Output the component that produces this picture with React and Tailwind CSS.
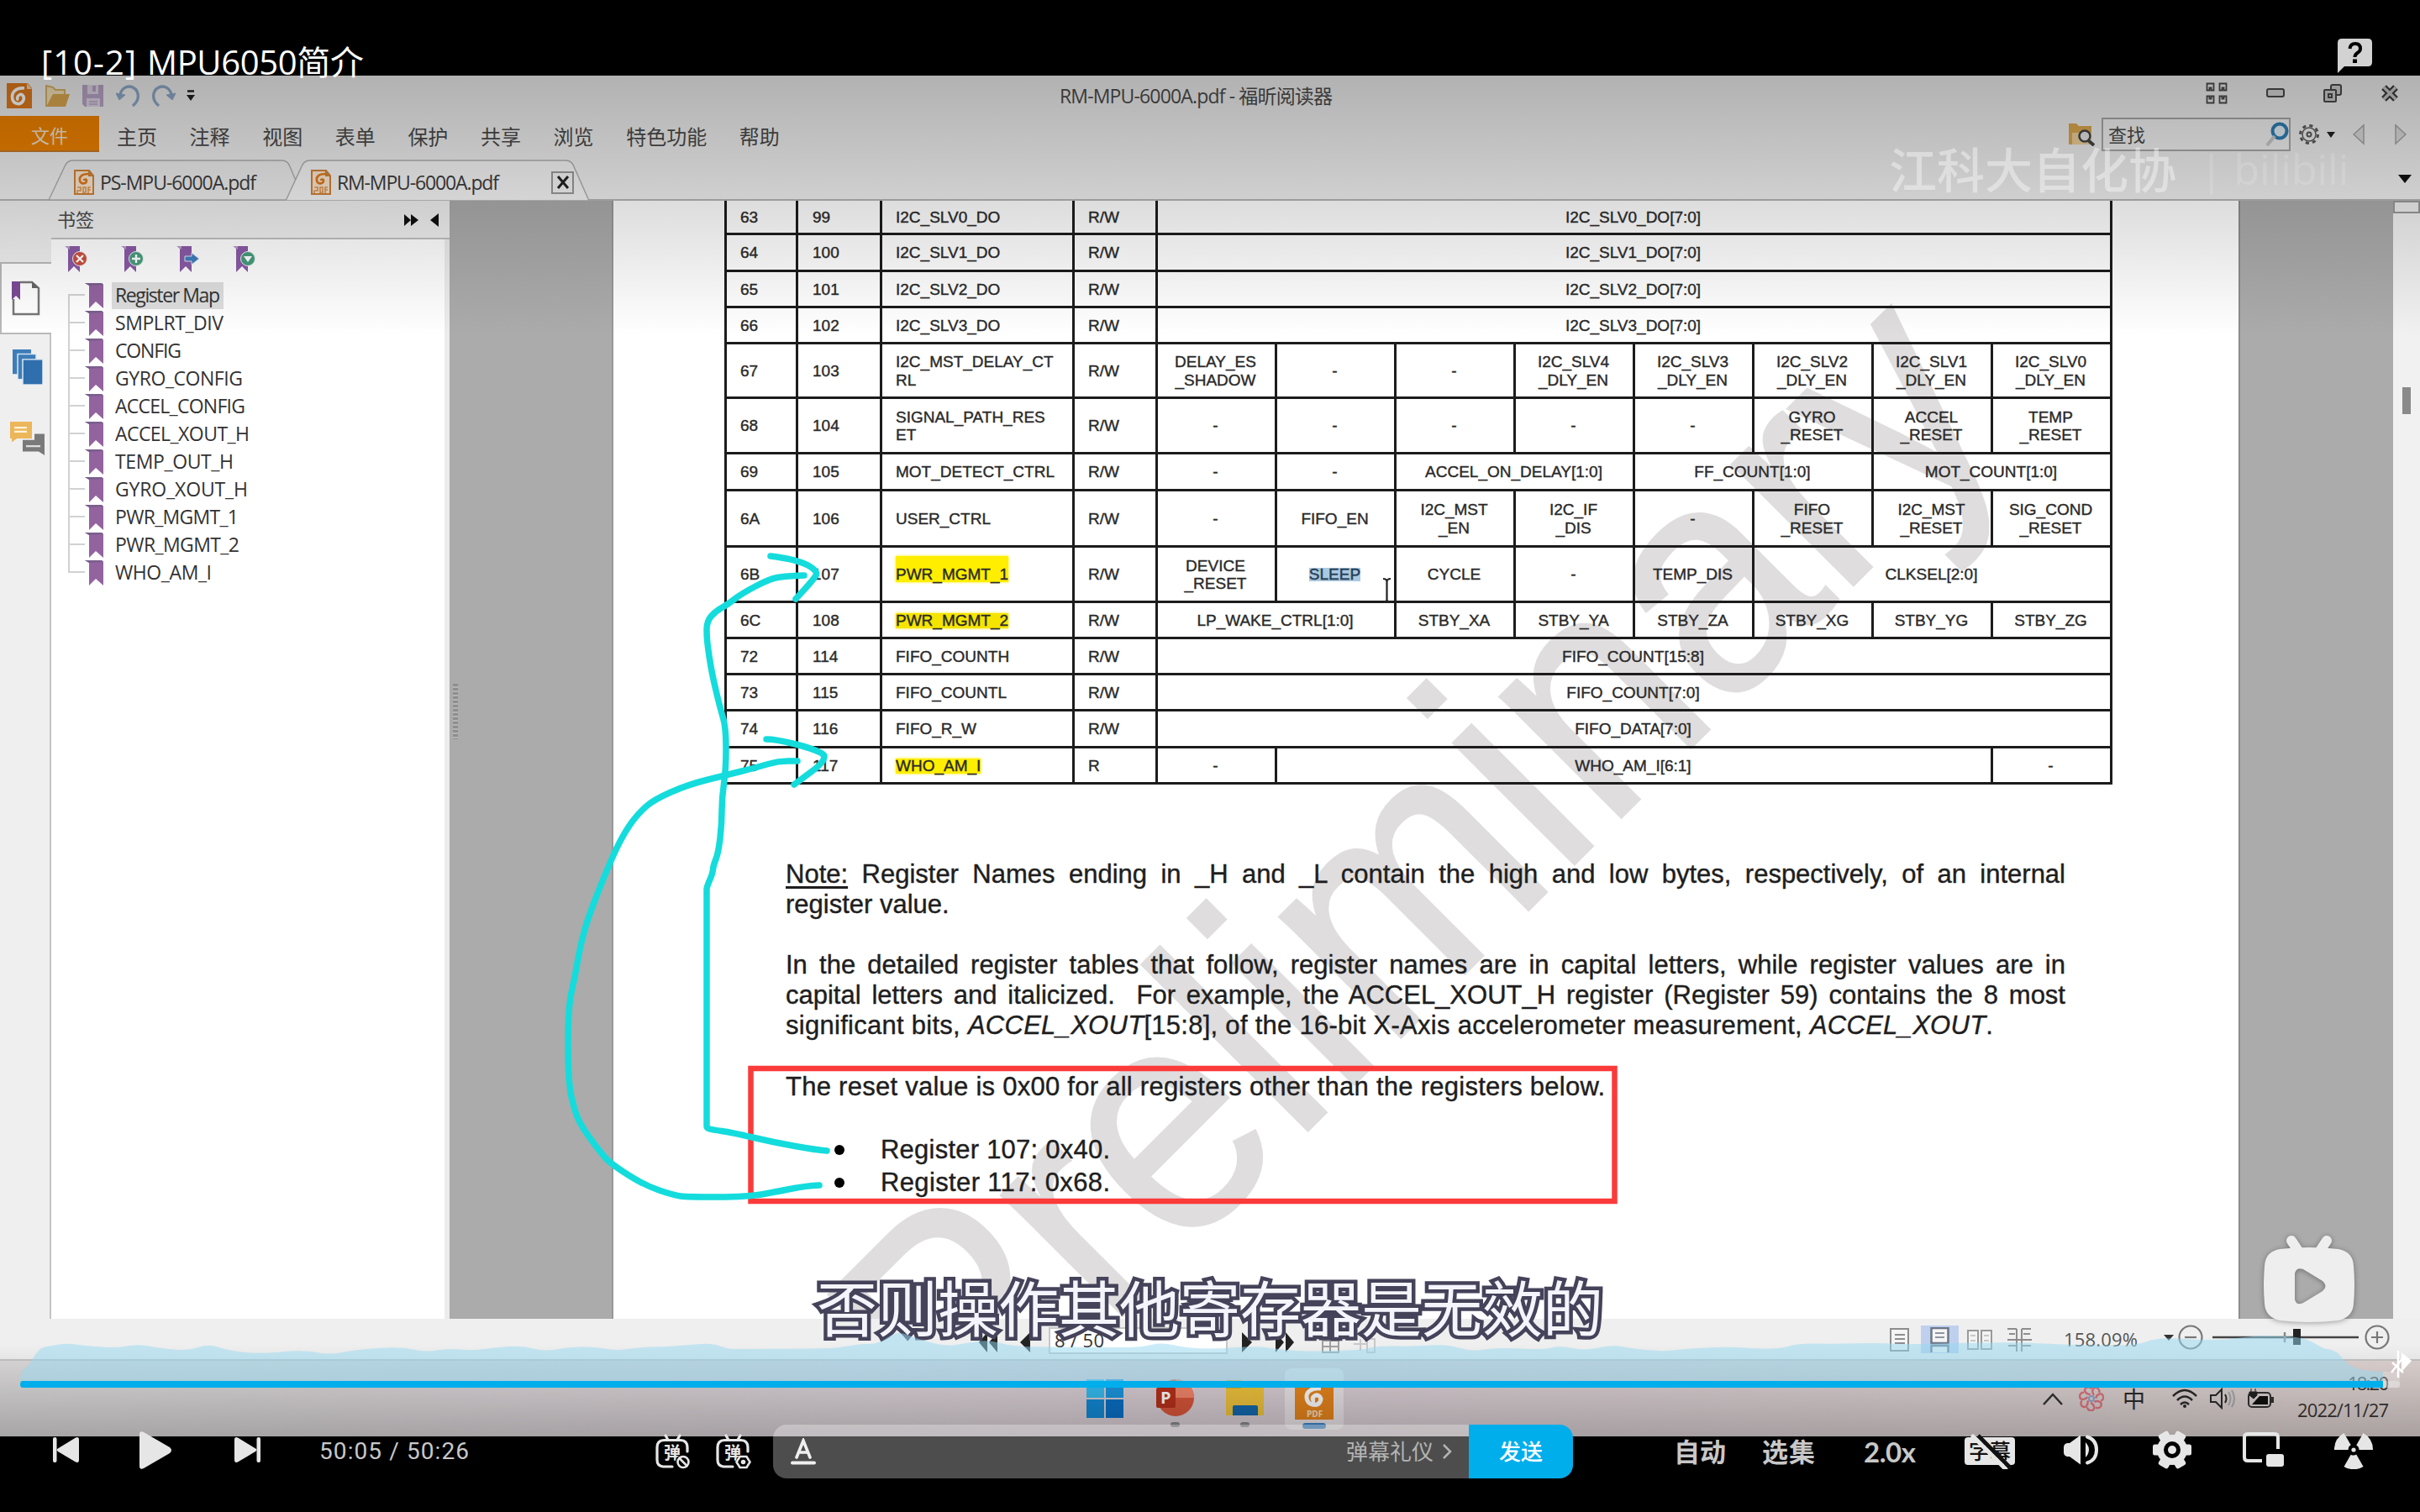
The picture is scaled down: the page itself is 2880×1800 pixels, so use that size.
import React, { useLayoutEffect, useRef, useState } from "react";

/* Single-line text whose letter spacing is adjusted to fill a width. */
function Fit({ w, className = "", children }) {
  const ref = useRef(null);
  const [ls, setLs] = useState(0);
  useLayoutEffect(() => {
    const natural = ref.current.getBoundingClientRect().width;
    const n = ref.current.textContent.length;
    setLs((w - natural) / Math.max(1, n - 1));
  }, [w]);
  return (
    <span className={`block shrink-0 whitespace-nowrap ${className}`} style={{ width: w }}>
      <span ref={ref} className="inline-block" style={{ letterSpacing: ls }}>
        {children}
      </span>
    </span>
  );
}

const smooth = (pts) => {
  let d = `M${pts[0][0]} ${pts[0][1]}`;
  for (let i = 1; i < pts.length - 1; i++) {
    const mx = (pts[i][0] + pts[i + 1][0]) / 2;
    const my = (pts[i][1] + pts[i + 1][1]) / 2;
    d += ` Q${pts[i][0]} ${pts[i][1]} ${mx} ${my}`;
  }
  const l = pts[pts.length - 1];
  return `${d} L${l[0]} ${l[1]}`;
};

/* ---------- window icons ---------- */
const FoxitIcon = ({ className }) => (
  <svg viewBox="0 0 30 30" className={className}>
    <path d="M0 0H25L30 6V30H0Z" fill="#e07a1c" />
    <path d="M24 0L30 7H24Z" fill="#f6d3ac" />
    <path d="M21 6C12 5 6 10 6.500 17C7 25 16 27 19.500 21C22 16 18 12 15 14C12 15.500 12 19 14 20" fill="none" stroke="#fff" strokeWidth="3.600" />
  </svg>
);
const FolderIcon = ({ className }) => (
  <svg viewBox="0 0 30 28" className={className}>
    <path d="M1 27V2L9 4L12 7H23V12" fill="#f5e3b8" stroke="#d9b266" strokeWidth="2" />
    <path d="M1 27L9 12H29L24 27Z" fill="#dca850" />
  </svg>
);
const SaveIcon = ({ className }) => (
  <svg viewBox="0 0 27 28" className={className}>
    <path d="M1 1H26V27H4L1 24Z" fill="#b9a5c8" />
    <rect x="7" y="1" width="13" height="11" fill="#ded6e4" />
    <rect x="13" y="2" width="4" height="7" fill="#b9a5c8" />
    <rect x="6" y="17" width="16" height="10" fill="#ded6e4" />
    <path d="M9 21H19M9 24H19" stroke="#b9a5c8" strokeWidth="1.500" />
  </svg>
);
const UndoIcon = ({ className }) => (
  <svg viewBox="0 0 29 28" className={className} fill="none" stroke="#8fa9c9" strokeWidth="3.400">
    <path d="M5 15C5 5 14 1 20 4C28 8 29 19 20 26" />
    <path d="M0 11L11 13L4 19Z" fill="#8fa9c9" strokeWidth="1" />
  </svg>
);
const PdfTabIcon = () => (
  <svg viewBox="0 0 24 30" className="h-[30px] w-6 shrink-0">
    <path d="M1 1H18L23 7V29H1Z" fill="#fbe7cf" stroke="#d08238" strokeWidth="2" />
    <path d="M17 1L23 8H17Z" fill="#d08238" />
    <path d="M17 5C9 5 6 9 7 13C8 18 15 17 15 13C15 11 12 11 12 13" fill="none" stroke="#e07a1c" strokeWidth="2.600" />
    <path d="M4 21H8V25H4V28M11 28V21H14V27H11M17 28V21H20M17 24H20" fill="none" stroke="#e09850" strokeWidth="1.600" />
  </svg>
);
const Bookmark = ({ className = "h-[33px] w-[27px]", badge }) => (
  <svg viewBox="0 0 27 33" className={className}>
    <path d="M1 1H18V32L11 25L4 32V4Z" fill="#8a5aa6" />
    <path d="M0 1H6V5Z" fill="#b79cc8" />
    {badge === "x" && (
      <g><circle cx="18" cy="16" r="8.500" fill="#c9503f" stroke="#f2f2f2" /><path d="M14 12L22 20M22 12L14 20" stroke="#fff" strokeWidth="2.400" /></g>
    )}
    {badge === "+" && (
      <g><circle cx="18" cy="16" r="8.500" fill="#469c7c" stroke="#f2f2f2" /><path d="M13 16H23M18 11V21" stroke="#fff" strokeWidth="2.400" /></g>
    )}
    {badge === ">" && <path d="M10 13H18V9L27 16L18 23V19H10Z" fill="#3f7dbd" stroke="#dbe6f2" />}
    {badge === "v" && (
      <g><circle cx="18" cy="16" r="8.500" fill="#469c7c" stroke="#f2f2f2" /><path d="M13 13H23L18 20Z" fill="#fff" /></g>
    )}
  </svg>
);

function TitleRow() {
  return (
    <div className="flex h-12 items-center">
      <FoxitIcon className="ml-2 h-[30px] w-[30px] shrink-0" />
      <FolderIcon className="ml-4 h-7 w-[30px] shrink-0" />
      <SaveIcon className="ml-[13px] h-7 w-[27px] shrink-0" />
      <UndoIcon className="ml-[14px] h-7 w-[29px] shrink-0" />
      <UndoIcon className="ml-[13px] h-7 w-[29px] shrink-0 -scale-x-100" />
      <svg viewBox="0 0 10 14" className="ml-[13px] h-[14px] w-[10px] shrink-0">
        <path d="M1 1.500H9" stroke="#222" strokeWidth="2.500" /><path d="M0 6H10L5 13Z" fill="#222" />
      </svg>
      <Fit w={325} className="ml-[1029px] text-[23px] text-[#4c4c4c]">RM-MPU-6000A.pdf - 福昕阅读器</Fit>
      <svg viewBox="0 0 26 26" className="mb-1.5 ml-[1039px] h-[26px] w-[26px] shrink-0" fill="none" stroke="#4a4a4a" strokeWidth="1.800">
        <path d="M1.500 9.500V1.500H9.500V9.500H6.500V6.500H4.500V9.500ZM16.500 9.500V1.500H24.500V9.500H21.500V6.500H19.500V9.500ZM1.500 16.500H4.500V19.500H6.500V16.500H9.500V24.500H1.500ZM16.500 16.500H19.500V19.500H21.500V16.500H24.500V24.500H16.500Z" />
      </svg>
      <svg viewBox="0 0 22 12" className="mb-1.5 ml-[46px] h-3 w-[22px] shrink-0" fill="#d8d8d8" stroke="#4a4a4a" strokeWidth="2">
        <rect x="1" y="1" width="20" height="9" rx="2" />
      </svg>
      <svg viewBox="0 0 22 22" className="mb-1.5 ml-[46px] h-[22px] w-[22px] shrink-0" fill="#cfcfcf" stroke="#4a4a4a" strokeWidth="2">
        <rect x="9" y="1" width="12" height="12" rx="2" /><rect x="1" y="7" width="14" height="14" rx="1" /><rect x="6" y="12" width="4" height="4" />
      </svg>
      <svg viewBox="0 0 22 20" className="mb-1.5 ml-[46px] h-5 w-[22px] shrink-0">
        <path d="M4 3L18 17M18 3L4 17" stroke="#3c3c3c" strokeWidth="8" /><path d="M4 3L18 17M18 3L4 17" stroke="#c8c8c8" strokeWidth="3.500" />
      </svg>
    </div>
  );
}

const MENUS = ["主页", "注释", "视图", "表单", "保护", "共享", "浏览", "特色功能", "帮助"];

function MenuRow() {
  return (
    <div className="flex h-[44px] items-center text-[24px] leading-none text-[#4a4a4a]">
      <div className="flex h-[43px] w-[118px] items-center justify-center self-start border-b-2 border-[#c77a28] bg-[#ef8200] pt-1 text-[22px] text-[#f3e3cc]">文件</div>
      <div className="ml-[21px] flex gap-[38.600px] pt-1.5">
        {MENUS.map((m) => <span key={m}>{m}</span>)}
      </div>
      <svg viewBox="0 0 32 28" className="ml-auto h-7 w-8">
        <path d="M1 26V1H10L13 4H28V26Z" fill="#dca850" /><path d="M5 26V12H28V26Z" fill="#eed09a" />
        <circle cx="20" cy="16" r="6.500" fill="#e4e4e4" stroke="#444" strokeWidth="2.500" /><path d="M24 21L31 27" stroke="#444" strokeWidth="4" />
      </svg>
      <div className="ml-2 flex h-10 w-[225px] items-center justify-between border-2 border-[#a9a9a9] bg-[#f2f2f2] pl-1.5 text-[22px]">
        查找
        <svg viewBox="0 0 28 30" className="h-[30px] w-7">
          <circle cx="17" cy="11" r="8.500" fill="#e2eef6" stroke="#2f7fb4" strokeWidth="4" /><path d="M11 17L2 28" stroke="#c9c9c9" strokeWidth="4" />
        </svg>
      </div>
      <svg viewBox="0 0 26 26" className="ml-[9px] h-[26px] w-[26px]" fill="none" stroke="#5a5a5a">
        <circle cx="13" cy="13" r="10.500" strokeWidth="3" strokeDasharray="4.100 4.150" /><circle cx="13" cy="13" r="8" strokeWidth="1.500" /><circle cx="13" cy="13" r="2.500" strokeWidth="2" />
      </svg>
      <svg viewBox="0 0 10 7" className="ml-2 h-[7px] w-[10px]"><path d="M0 0H10L5 7Z" fill="#222" /></svg>
      <svg viewBox="0 0 14 26" className="ml-[21px] h-[26px] w-[14px]"><path d="M13 2V24L1 13Z" fill="#dcdcdc" stroke="#a5a5a5" strokeWidth="1.500" /></svg>
      <svg viewBox="0 0 14 26" className="ml-9 mr-4 h-[26px] w-[14px]"><path d="M1 2V24L13 13Z" fill="#dcdcdc" stroke="#a5a5a5" strokeWidth="1.500" /></svg>
    </div>
  );
}

function TabRow() {
  return (
    <div className="relative flex h-[57px] items-center border-b-2 border-[#b4b4b4] pt-[15px]">
      <svg viewBox="0 0 720 57" className="absolute bottom-[-2px] left-0 h-[57px] w-[720px]">
        <path d="M58 56L78 14Q81 9 87 9H335Q341 9 344 14L362 56Z" fill="#eeeeee" stroke="#b0b0b0" strokeWidth="1.500" />
        <path d="M340 57L360 14Q363 9 369 9H673Q679 9 682 14L701 57Z" fill="#f6f6f6" stroke="#b0b0b0" strokeWidth="1.500" />
      </svg>
      <div className="relative ml-[88px] flex items-center text-[23px] leading-none text-[#3c3c3c]">
        <PdfTabIcon />
        <Fit w={186} className="ml-[7px]">PS-MPU-6000A.pdf</Fit>
        <div className="w-[65px]" />
        <PdfTabIcon />
        <Fit w={193} className="ml-[7px]">RM-MPU-6000A.pdf</Fit>
        <div className="ml-[62px] flex h-[27px] w-[27px] items-center justify-center border-2 border-[#9a9a9a] bg-[#f5f5f5]">
          <svg viewBox="0 0 16 16" className="h-4 w-4"><path d="M2 1L14 15M14 1L2 15" stroke="#222" strokeWidth="3" /></svg>
        </div>
      </div>
      <svg viewBox="0 0 16 10" className="relative ml-auto mr-[10px] mb-2 h-[10px] w-4"><path d="M0 0H16L8 10Z" fill="#111" /></svg>
    </div>
  );
}

const MARKS = [
  ["Register Map", 127], ["SMPLRT_DIV", 131], ["CONFIG", 81], ["GYRO_CONFIG", 154], ["ACCEL_CONFIG", 157],
  ["ACCEL_XOUT_H", 162], ["TEMP_OUT_H", 143], ["GYRO_XOUT_H", 160], ["PWR_MGMT_1", 149], ["PWR_MGMT_2", 150], ["WHO_AM_I", 117],
];

function Sidebar() {
  return (
    <>
      <div className="flex w-[61px] shrink-0 flex-col bg-[#efefef]">
        <div className="h-[73px]" />
        <div className="flex h-[86px] items-center justify-center border-y-2 border-l-2 border-[#b9b9b9] bg-white pr-0.5">
          <svg viewBox="0 0 34 42" className="h-[42px] w-[34px]">
            <path d="M2 22V40H32V9L24 2H10" fill="none" stroke="#777" strokeWidth="2.500" /><path d="M24 1V9H32Z" fill="#666" />
            <path d="M0 1H10V23L5 18L0 23Z" fill="#7c4a96" />
          </svg>
        </div>
        <div className="flex-1 border-r-2 border-[#c4c4c4]">
          <svg viewBox="0 0 36 46" preserveAspectRatio="none" className="ml-[15px] mt-[18px] h-[42px] w-9">
            <rect x="0" y="0" width="22" height="32" fill="#3e7db8" /><rect x="6" y="6" width="22" height="33" fill="#3e7db8" stroke="#dde8f2" strokeWidth="1.500" /><rect x="12" y="13" width="24" height="33" fill="#2f6fae" stroke="#dde8f2" strokeWidth="1.500" />
          </svg>
          <svg viewBox="0 0 44 46" preserveAspectRatio="none" className="ml-[11px] mt-[43px] h-[42px] w-11">
            <path d="M1 1H27V23H9L3 28V23H1Z" fill="#ecb65a" /><path d="M6 9H21M6 14H21" stroke="#fff3d8" strokeWidth="2.500" />
            <path d="M30 17H42V45L35 40H16V25H30Z" fill="#7a7a7a" /><path d="M20 33H37" stroke="#ddd" strokeWidth="2.500" />
          </svg>
        </div>
      </div>
      <div className="flex w-[474px] shrink-0 flex-col">
        <div className="flex h-[46px] items-center border-b-2 border-[#c0c0c0] bg-[#efefef] text-[22px] text-[#4a4a4a]">
          <span className="ml-[7px] flex-1">书签</span>
          <svg viewBox="0 0 17 14" className="mt-0.5 h-[14px] w-[17px]"><path d="M0 0L8 7L0 14ZM8 0L17 7L8 14Z" fill="#111" /></svg>
          <svg viewBox="0 0 10 16" className="ml-[14px] mr-[13px] mt-0.5 h-4 w-[10px]"><path d="M10 0V16L0 8Z" fill="#111" /></svg>
        </div>
        <div className="flex-1 border-r-[6px] border-[#ececec] bg-white">
          <div className="ml-[16px] mt-[7px] flex gap-[39.600px]">
            <Bookmark badge="x" /><Bookmark badge="+" /><Bookmark badge=">" /><Bookmark badge="v" />
          </div>
          <div className="ml-5 mt-[10px]">
            {MARKS.map(([name, w], i) => (
              <div key={name} className="flex h-[33px] items-center">
                <div className="flex h-full w-5 flex-col">
                  <div className={`h-1/2 border-b-2 border-[#d2d2d2] ${i ? "border-l-2" : ""}`} />
                  <div className={`h-1/2 border-[#d2d2d2] ${i < MARKS.length - 1 ? "border-l-2" : ""}`} />
                </div>
                <svg viewBox="0 0 22 30" className="h-[30px] w-[22px]">
                  <path d="M0 0H20L22 2V30L13 22L5 30V3Z" fill="#93639f" /><path d="M0 0H20L22 2L5 3Z" fill="#7a5f8c" />
                </svg>
                <div className={`ml-[10px] flex h-8 items-center px-1 text-[23px] leading-none text-[#333] ${i ? "" : "bg-[#dedede]"}`}>
                  <Fit w={w - 2}>{name}</Fit>
                </div>
              </div>
            ))}
          </div>
        </div>
      </div>
    </>
  );
}

/* Rows: hex address, decimal address, name, access, bit fields [text, span] */
const D = ["-", 1];
const ROWS = [
  ["h-[41px]", "63", "99", "I2C_SLV0_DO", "R/W", [["I2C_SLV0_DO[7:0]", 8]]],
  ["h-[44px]", "64", "100", "I2C_SLV1_DO", "R/W", [["I2C_SLV1_DO[7:0]", 8]]],
  ["h-[43px]", "65", "101", "I2C_SLV2_DO", "R/W", [["I2C_SLV2_DO[7:0]", 8]]],
  ["h-[43px]", "66", "102", "I2C_SLV3_DO", "R/W", [["I2C_SLV3_DO[7:0]", 8]]],
  ["h-[65px]", "67", "103", "I2C_MST_DELAY_CT\nRL", "R/W", [["DELAY_ES\n_SHADOW", 1], D, D, ["I2C_SLV4\n_DLY_EN", 1], ["I2C_SLV3\n_DLY_EN", 1], ["I2C_SLV2\n_DLY_EN", 1], ["I2C_SLV1\n_DLY_EN", 1], ["I2C_SLV0\n_DLY_EN", 1]]],
  ["h-[66px]", "68", "104", "SIGNAL_PATH_RES\nET", "R/W", [D, D, D, D, D, ["GYRO\n_RESET", 1], ["ACCEL\n_RESET", 1], ["TEMP\n_RESET", 1]]],
  ["h-[44px]", "69", "105", "MOT_DETECT_CTRL", "R/W", [D, D, ["ACCEL_ON_DELAY[1:0]", 2], ["FF_COUNT[1:0]", 2], ["MOT_COUNT[1:0]", 2]]],
  ["h-[67px]", "6A", "106", "USER_CTRL", "R/W", [D, ["FIFO_EN", 1], ["I2C_MST\n_EN", 1], ["I2C_IF\n_DIS", 1], D, ["FIFO\n_RESET", 1], ["I2C_MST\n_RESET", 1], ["SIG_COND\n_RESET", 1]]],
  ["h-[66px]", "6B", "107", "PWR_MGMT_1", "R/W", [["DEVICE\n_RESET", 1], ["SLEEP", 1], ["CYCLE", 1], D, ["TEMP_DIS", 1], ["CLKSEL[2:0]", 3]]],
  ["h-[43px]", "6C", "108", "PWR_MGMT_2", "R/W", [["LP_WAKE_CTRL[1:0]", 2], ["STBY_XA", 1], ["STBY_YA", 1], ["STBY_ZA", 1], ["STBY_XG", 1], ["STBY_YG", 1], ["STBY_ZG", 1]]],
  ["h-[43px]", "72", "114", "FIFO_COUNTH", "R/W", [["FIFO_COUNT[15:8]", 8]]],
  ["h-[43px]", "73", "115", "FIFO_COUNTL", "R/W", [["FIFO_COUNT[7:0]", 8]]],
  ["h-[44px]", "74", "116", "FIFO_R_W", "R/W", [["FIFO_DATA[7:0]", 8]]],
  ["h-[43px]", "75", "117", "WHO_AM_I", "R", [D, ["WHO_AM_I[6:1]", 6], D]],
];
const SPAN = { 1: "w-[142px]", 2: "w-[284px]", 3: "w-[426px]", 6: "w-[852px]", 8: "w-[1136px]" };
const MARKED = {
  PWR_MGMT_1: "bg-[#ffee00] pt-[13px] -mt-[13px] shadow-[0_0_3px_#ffee00]",
  PWR_MGMT_2: "bg-[#f5e400] shadow-[0_0_3px_#f5e400]",
  WHO_AM_I: "bg-[#ffee00] shadow-[0_0_3px_#ffee00]",
};

function RegisterTable() {
  const cell = "flex items-center border-b-[3px] border-r-[3px] border-[#1c1c1c] shrink-0 pt-px";
  return (
    <div className="ml-[132px] w-[1652px] whitespace-pre text-[19px] leading-[21.500px] text-[#2a2a2a] [-webkit-text-stroke:0.400px_#2a2a2a]">
      {ROWS.map(([h, hex, dec, name, rw, bits]) => (
        <div key={hex} className={`flex ${h}`}>
          <div className={`${cell} w-[88px] border-l-[3px] pl-4`}>{hex}</div>
          <div className={`${cell} w-[100px] pl-[17px]`}>{dec}</div>
          <div className={`${cell} w-[229px] pl-4`}>
            <span className={MARKED[name] ? `leading-[18px] ${MARKED[name]}` : ""}>{name}</span>
          </div>
          <div className={`${cell} w-[99px] pl-4`}>{rw}</div>
          {bits.map(([t, s], i) => (
            <div key={i} className={`${cell} justify-center pr-0.5 text-center ${SPAN[s]}`}>
              <span className={t === "SLEEP" ? "bg-[#a9c8e2] leading-[16px] text-[#1d4468]" : ""}>{t}</span>
            </div>
          ))}
        </div>
      ))}
    </div>
  );
}

function Page() {
  const just = "block [text-align-last:justify]";
  return (
    <div className="relative w-[1934px] shrink-0 overflow-hidden bg-white font-['Liberation_Sans',sans-serif]">
      <div className="absolute left-[424px] top-[1511px] h-0 w-0 -rotate-45">
        <span className="absolute bottom-[-59px] left-0 origin-bottom-left scale-x-[.91] text-[386px] leading-none text-[#dfddde] [-webkit-text-stroke:3px_#dfddde]">Preliminary</span>
      </div>
      <div className="relative">
        <RegisterTable />
        <div className="ml-[205px] mt-[89px] w-[1523px] text-[31px] leading-[36px] text-[#1e1e1e] [-webkit-text-stroke:0.400px_#1e1e1e]">
          <p>
            <span className={just}><u className="underline-offset-4">Note:</u> Register Names ending in _H and _L contain the high and low bytes, respectively, of an internal</span>
            <span className="block">register value.</span>
          </p>
          <p className="mt-9">
            <span className={just}>In the detailed register tables that follow, register names are in capital letters, while register values are in</span>
            <span className={just}>capital letters and italicized.&nbsp; For example, the ACCEL_XOUT_H register (Register 59) contains the 8 most</span>
            <Fit w={1437}>significant bits, <i>ACCEL_XOUT</i>[15:8], of the 16-bit X-Axis accelerometer measurement, <i>ACCEL_XOUT</i>.</Fit>
          </p>
          <p className="mt-[37px]"><Fit w={975}>The reset value is 0x00 for all registers other than the registers below.</Fit></p>
          <ul className="ml-[58px] mt-[37px] leading-[39px]">
            {["Register 107: 0x40.", "Register 117: 0x68."].map((t) => (
              <li key={t} className="flex items-center">
                <span className="h-3 w-3 rounded-full bg-black" />
                <Fit w={273} className="ml-[43px]">{t}</Fit>
              </li>
            ))}
          </ul>
        </div>
      </div>
    </div>
  );
}

function StatusBar() {
  return (
    <div className="flex h-[50px] items-center border-b-2 border-[#c4c4c4] bg-[#efefef] text-[22px] leading-none text-[#333]">
      <svg viewBox="0 0 24 24" className="ml-[1163px] mt-2 h-6 w-6 shrink-0"><path d="M12 0V24L2 12ZM24 0V24L14 12Z" fill="#222" /></svg>
      <svg viewBox="0 0 12 24" className="ml-[27px] mt-2 h-6 w-3 shrink-0"><path d="M12 0V24L0 12Z" fill="#222" /></svg>
      <div className="ml-[22px] mt-1 flex h-8 w-[213px] items-end border-2 border-[#c8c8c8] bg-white pb-1 pl-[5px]"><Fit w={59}>8 / 50</Fit></div>
      <svg viewBox="0 0 12 24" className="ml-[17px] mt-2 h-6 w-3 shrink-0"><path d="M0 0V24L12 12Z" fill="#222" /></svg>
      <svg viewBox="0 0 24 24" className="ml-[28px] mt-2 h-6 w-6 shrink-0"><path d="M0 0V24L10 12ZM12 0V24L22 12Z" fill="#222" /></svg>
      <svg viewBox="0 0 64 24" className="ml-[31px] mt-3 h-6 w-16 shrink-0" fill="none" stroke="#a0a0a0" strokeWidth="2"><path d="M1 8H20V22H1ZM1 15H20M10 8V22" /><path stroke="#c8c8c8" d="M38 12H54M46 6V20M54 6H63V22H54Z" /></svg>
      <svg viewBox="0 0 24 29" className="ml-[612px] mt-0.5 h-[29px] w-6 shrink-0" fill="#f4f4f4" stroke="#8d8d8d" strokeWidth="2"><rect x="1" y="1" width="21" height="26" /><path d="M6 8H18M6 13H18M6 18H18" /></svg>
      <div className="ml-[13px] flex h-[33px] w-[45px] justify-center bg-[#bed0ee] pt-0.5">
        <svg viewBox="0 0 24 30" className="h-[30px] w-6" fill="#f4f4f4" stroke="#6d7688" strokeWidth="2.500"><rect x="1.500" y="1" width="20" height="18" /><path d="M6 7H17M6 12H17" strokeWidth="1.500" /><path d="M1.500 30V22H21.500V30" /></svg>
      </div>
      <svg viewBox="0 0 30 25" className="ml-[10px] mt-0.5 h-[25px] w-[30px] shrink-0" fill="#f4f4f4" stroke="#9a9a9a" strokeWidth="2"><rect x="1" y="1" width="12" height="22" /><rect x="17" y="1" width="12" height="22" /><path d="M4 7H10M4 13H10M20 7H26M20 13H26" strokeWidth="1" /></svg>
      <svg viewBox="0 0 29 29" className="ml-[18px] mt-0.5 h-[29px] w-[29px] shrink-0" fill="none" stroke="#8d8d8d" strokeWidth="2"><path d="M11 1V28M17 1V28M0 1H11M0 14H29M17 1H28M1 21H11M17 21H28M2 7H9M19 7H27" /></svg>
      <Fit w={88} className="ml-[38px] text-[#555]">158.09%</Fit>
      <svg viewBox="0 0 12 7" className="ml-[31px] h-[7px] w-3 shrink-0 -translate-y-0.5"><path d="M0 0H12L6 7Z" fill="#333" /></svg>
      <svg viewBox="0 0 30 30" className="ml-[5px] h-[30px] w-[30px] shrink-0 -translate-y-0.5" fill="none" stroke="#777" strokeWidth="2.200"><circle cx="15" cy="15" r="13.500" /><path d="M8 15H22" /></svg>
      <svg viewBox="0 0 174 22" className="ml-[11px] h-[22px] w-[174px] shrink-0 -translate-y-0.5"><path d="M0 11H174" stroke="#444" strokeWidth="2.500" /><path d="M86 5V17" stroke="#888" strokeWidth="2.500" /><rect x="96" y="1" width="9" height="19" fill="#222" /></svg>
      <svg viewBox="0 0 30 30" className="ml-[7px] h-[30px] w-[30px] shrink-0 -translate-y-0.5" fill="none" stroke="#777" strokeWidth="2.200"><circle cx="15" cy="15" r="13.500" /><path d="M8 15H22M15 8V22" /></svg>
    </div>
  );
}

function Taskbar() {
  return (
    <div className="flex flex-1 items-center bg-linear-to-r from-[#dcdada] via-[#dacfd6] to-[#dfd4d2]">
      <svg viewBox="0 0 44 46" className="ml-[1293px] h-[46px] w-11 shrink-0"><path d="M0 0H21V22H0Z" fill="#35bdf2" /><path d="M23 0H44V22H23Z" fill="#1c97e0" /><path d="M0 24H21V46H0Z" fill="#128ad6" /><path d="M23 24H44V46H23Z" fill="#0a70c6" /></svg>
      <svg viewBox="0 0 46 58" className="ml-[38px] mt-3 h-[58px] w-[46px] shrink-0">
        <circle cx="24" cy="22" r="22" fill="#d9563a" /><path d="M24 0A22 22 0 0 1 46 22H24Z" fill="#f5866a" /><rect x="1" y="10" width="23" height="24" rx="2" fill="#b8301c" />
        <text x="6" y="29" fontSize="20" fontWeight="700" fill="#fff" fontFamily="Open Sans, sans-serif">P</text>
        <rect x="18" y="51" width="11" height="6" rx="3" fill="#888" />
      </svg>
      <svg viewBox="0 0 46 58" className="ml-[38px] mt-3 h-[58px] w-[46px] shrink-0">
        <path d="M0 1H18L22 6H45V43H0Z" fill="#f0c43c" /><path d="M0 1H18V11H0Z" fill="#dca82a" /><path d="M8 33Q8 31 10 31H36Q38 31 38 33V43H8Z" fill="#1368ad" />
        <rect x="17" y="51" width="11" height="6" rx="3" fill="#888" />
      </svg>
      <div className="ml-6 flex h-[73px] w-[70px] shrink-0 flex-col items-center rounded-lg bg-white/45 pt-[15px]">
        <svg viewBox="0 0 46 46" className="h-[46px] w-[46px]">
          <rect width="46" height="46" fill="#e8851c" /><path d="M31 9C20 8 13 13 14 20C15 29 26 31 30 25C33 19 27 15 23 18C20 20 21 24 24 24" fill="none" stroke="#fff" strokeWidth="5" />
          <text x="14" y="43" fontSize="10" fontWeight="700" fill="#fbe3c4" fontFamily="Open Sans, sans-serif">PDF</text>
        </svg>
        <div className="mt-[4px] h-[7px] w-7 rounded-full bg-[#3f86c8]" />
      </div>
      <svg viewBox="0 0 26 16" className="ml-[831px] h-4 w-[26px] shrink-0" fill="none" stroke="#333" strokeWidth="2.500"><path d="M2 15L13 3L24 15" /></svg>
      <svg viewBox="-15 -15 30 30" className="ml-[18px] h-[30px] w-[30px] shrink-0" fill="none" stroke="#e07880" strokeWidth="2.400">
        {[0, 51, 103, 154, 206, 257, 309].map((a) => <path key={a} transform={`rotate(${a})`} d="M3 -4C0 -8 1 -14 6 -13C9 -12 10 -9 9 -7" />)}
        <circle r="3" stroke="#8fa9d0" strokeWidth="2" />
      </svg>
      <span className="ml-[22px] w-7 shrink-0 text-[27px] leading-none text-[#2a2a2a]">中</span>
      <svg viewBox="0 0 30 24" className="ml-[31px] h-6 w-[30px] shrink-0" fill="none" stroke="#2a2a2a" strokeWidth="2.500"><path d="M1 9Q15 -5 29 9M6 14Q15 5 24 14M10 19Q15 14 20 19" /><circle cx="15" cy="21" r="2" fill="#2a2a2a" stroke="none" /></svg>
      <svg viewBox="0 0 30 26" className="ml-[15px] h-[26px] w-[30px] shrink-0" fill="none" stroke="#2a2a2a" strokeWidth="2"><path d="M1 9H7L14 2V24L7 17H1Z" /><path d="M18 8Q21 13 18 18" /><path d="M22 5Q27 13 22 21M26 3Q32 13 26 23" stroke="#aaa" /></svg>
      <svg viewBox="0 0 32 24" className="ml-[15px] h-6 w-8 shrink-0"><rect x="1" y="5" width="26" height="17" rx="4" fill="none" stroke="#333" strokeWidth="2" /><path d="M5 19L14 9H24V19Z" fill="#111" /><rect x="28" y="10" width="3" height="7" fill="#333" /><path d="M4 0V4M9 0V4M2 4H11V8L7 12L2 8Z" fill="#222" stroke="#222" /></svg>
      <div className="mb-1.5 ml-auto mr-[37px] flex h-[54px] flex-col items-end justify-between text-[22px] leading-none text-[#3a3434]">
        <Fit w={49}>18:20</Fit>
        <Fit w={109}>2022/11/27</Fit>
      </div>
    </div>
  );
}

/* ---------- overlays ---------- */
const WAVE = [[24, 1644], [24, 1632], [34, 1627], [46, 1605], [61, 1602], [80, 1599], [101, 1602], [138, 1605], [164, 1600], [190, 1605], [223, 1608], [249, 1600], [269, 1607], [306, 1612], [361, 1607], [392, 1613], [422, 1607], [476, 1603], [507, 1610], [533, 1605], [563, 1608], [591, 1604], [621, 1602], [649, 1609], [674, 1604], [707, 1603], [732, 1608], [762, 1604], [796, 1603], [820, 1601], [848, 1599], [866, 1606], [882, 1606], [960, 1605.600], [997, 1605], [1021, 1600], [1046, 1600], [1067, 1584], [1089, 1593], [1125, 1603], [1150, 1599], [1177, 1595], [1205, 1603], [1254, 1603.600], [1327, 1604], [1358, 1604], [1382, 1598], [1413, 1605], [1450, 1606], [1493, 1602], [1542, 1609], [1585, 1608], [1621, 1607], [1640, 1602], [1683, 1603], [1722, 1600], [1750, 1609], [1784, 1604], [1836, 1607], [1857, 1602], [1885, 1608], [1920, 1601], [1940, 1605], [1978, 1609], [2003, 1606], [2058, 1603], [2093, 1606], [2123, 1605], [2140, 1599], [2187, 1600], [2233, 1598.500], [2270, 1600.500], [2320, 1599], [2400, 1598], [2420, 1599], [2467, 1601], [2543, 1602], [2567, 1592], [2617, 1595], [2650, 1595], [2683, 1590], [2717, 1590], [2747, 1594], [2765, 1606], [2780, 1607], [2797, 1629], [2830, 1633], [2836, 1633]];
const INK = [
  [[984, 1370], [972, 1369], [921, 1360], [870, 1348], [848, 1345], [841, 1343], [841, 1338], [841, 1062], [841, 1056], [848, 1040], [849, 1030], [855, 1015], [859, 980], [859, 950], [864, 916], [864, 866], [857, 843], [848, 805], [844, 782], [841, 759], [841, 740], [851, 728], [867, 719], [882, 707], [916, 689], [934, 686], [957, 685]],
  [[917, 662], [949, 666], [974, 680], [968, 690], [947, 713]],
  [[975, 1411], [958, 1412], [933, 1417], [890, 1425], [818, 1425], [802, 1423], [767, 1411], [729, 1387], [716, 1374], [692, 1341], [684, 1323], [676, 1288], [676, 1199], [684, 1164], [691, 1123], [702, 1086], [729, 1019], [745, 988], [760, 968], [778, 952], [819, 934], [863, 923], [903, 913], [926, 906], [949, 906]],
  [[912, 880], [923, 880], [967, 891], [988, 902], [945, 934]],
];

function Annotations() {
  return (
    <svg viewBox="0 0 2880 1800" className="pointer-events-none absolute inset-0 h-[1800px] w-[2880px]" fill="none">
      <rect x="893.500" y="1272" width="1028" height="158" stroke="#fb3a3a" strokeWidth="6.500" />
      <g stroke="#14dcdc" strokeWidth="7.500" strokeLinecap="round" strokeLinejoin="round">
        {INK.map((p, i) => <path key={i} d={smooth(p)} />)}
      </g>
      <path d="M1646 689Q1650 689 1650.500 692Q1651 689 1655 689M1650.500 692V714M1646 717Q1650 717 1650.500 714Q1651 717 1655 717" stroke="#222" strokeWidth="2.200" />
    </svg>
  );
}

function ProgressBar() {
  return (
    <svg viewBox="0 0 2880 1800" className="pointer-events-none absolute inset-0 h-[1800px] w-[2880px]">
      <path d={`${smooth(WAVE)} V1644 Z`} fill="#95d9f1" fillOpacity=".5" />
      <rect x="2836" y="1633" width="20" height="11" fill="#fff" fillOpacity=".2" />
      <rect x="2832" y="1644" width="24" height="8" rx="3" fill="#fff" fillOpacity=".4" />
      <path d="M27 1644H2836V1652H27Q24 1652 24 1648Q24 1644 27 1644Z" fill="#00aeec" />
      <path d="M2854 1608V1640M2847 1622L2860 1634M2860 1616L2846 1634" stroke="#fff" strokeWidth="2.500" />
      <path d="M2858 1610L2870 1620L2858 1633Z" fill="#fff" />
    </svg>
  );
}

const DanmakuIcon = ({ kind, className }) => (
  <svg viewBox="0 0 42 42" className={className} fill="none" stroke="#e6e6e6" strokeWidth="3.200" strokeLinecap="round">
    <path d="M12 2L15 7M29 2L26 7M20 39H9Q2 38 2 31V16Q2 8 10 7.500H30Q38 8 38 16V21" />
    <text x="10" y="30" fontSize="20" fontWeight="700" stroke="none" fill="#e6e6e6" fontFamily="Noto Sans CJK SC, sans-serif">弹</text>
    <circle cx="33" cy="34" r="9.500" fill="#000" stroke="none" />
    {kind === "off" ? (
      <g strokeWidth="2.600"><circle cx="33" cy="33.500" r="6.500" /><path d="M28.500 29L37.500 38" /></g>
    ) : (
      <g strokeWidth="2.600"><path d="M28.500 27H36.500L40.500 33.500L36.500 40H28.500L24.500 33.500Z" /><circle cx="32.500" cy="33.500" r="1.500" fill="#e6e6e6" /></g>
    )}
  </svg>
);

function Controls() {
  return (
    <div className="absolute left-0 top-[1696px] flex h-16 w-[2880px] items-center text-[#c8c8c8]">
      <svg viewBox="0 0 31 30" className="mt-[-4px] ml-[63px] h-[30px] w-[31px] shrink-0" fill="#e6e6e6"><rect width="4.500" height="30" rx="2" /><path d="M5 14L27 .5Q31 -1 31 3V27Q31 31 27 29.500L6 17Q4 15.500 5 14Z" /></svg>
      <svg viewBox="0 0 38 45" className="mt-[-3px] ml-[72px] h-[45px] w-[38px] shrink-0" fill="#e6e6e6"><path d="M0 4Q0 -1.500 5 1L36 19Q40 22.500 36 26L5 44Q0 46.500 0 41Z" /></svg>
      <svg viewBox="0 0 31 30" className="mt-[-4px] ml-[75px] h-[30px] w-[31px] shrink-0 -scale-x-100" fill="#e6e6e6"><rect width="4.500" height="30" rx="2" /><path d="M5 14L27 .5Q31 -1 31 3V27Q31 31 27 29.500L6 17Q4 15.500 5 14Z" /></svg>
      <Fit w={178} className="ml-[70px] font-['Roboto',sans-serif] text-[28px] leading-none">50:05 / 50:26</Fit>
      <DanmakuIcon kind="off" className="ml-[222px] h-[42px] w-[42px] shrink-0" />
      <DanmakuIcon kind="set" className="ml-[30px] h-[42px] w-[42px] shrink-0" />
      <div className="ml-[26px] flex h-16 w-[828px] shrink-0 items-center rounded-l-2xl bg-white/30">
        <svg viewBox="0 0 30 32" className="ml-[21px] h-8 w-[30px]" fill="none" stroke="#f0f0f0" strokeLinecap="round"><path d="M7 23L15 3L23 23M10 17H20" strokeWidth="3.600" /><path d="M2 29.500H28" strokeWidth="4" /></svg>
        <span className="ml-auto text-[26px] leading-none text-[#b4b4b4]">弹幕礼仪</span>
        <svg viewBox="0 0 12 20" className="ml-[10px] mr-[20px] h-5 w-3" fill="none" stroke="#b4b4b4" strokeWidth="2.500"><path d="M2 2L10 10L2 18" /></svg>
      </div>
      <div className="flex h-16 w-[124px] shrink-0 items-center justify-center rounded-r-2xl bg-[#00aeec] text-[26px] font-medium text-white">发送</div>
      <Fit w={62} className="ml-[120px] text-[31px] font-bold leading-none">自动</Fit>
      <Fit w={63} className="ml-[43px] text-[31px] font-bold leading-none">选集</Fit>
      <Fit w={62} className="ml-[58px] font-['Lato',sans-serif] text-[33px] font-bold leading-none">2.0x</Fit>
      <svg viewBox="0 0 64 42" className="ml-[57px] h-[42px] w-16 shrink-0">
        <rect x="1" y="4" width="60" height="33" rx="4" fill="#e6e6e6" />
        <text x="6" y="30" fontSize="25" fontWeight="500" fill="#111" fontFamily="Noto Sans CJK SC, sans-serif">字幕</text>
        <path d="M17 2L56 41" stroke="#111" strokeWidth="5" /><path d="M11 3L50 42" stroke="#e6e6e6" strokeWidth="5" strokeLinecap="round" />
      </svg>
      <svg viewBox="0 0 42 38" className="-mt-1 ml-[55px] h-[38px] w-[42px] shrink-0"><path d="M20 1.500V36.500L7 27H4Q0 26 0 22V16Q0 12 4 11H7Z" fill="#e6e6e6" /><path d="M26 10Q34 19 26 28Z" fill="#e6e6e6" /><path d="M28 3.500Q39 7 39 19T28 34.500" fill="none" stroke="#e6e6e6" strokeWidth="4" strokeLinecap="round" /></svg>
      <svg viewBox="-23 -23 46 46" className="-mt-1 ml-[64px] h-[46px] w-[46px] shrink-0">
        <g fill="#e6e6e6">
          <circle r="18" />
          {[0, 60, 120, 180, 240, 300].map((a) => <rect key={a} x="13" y="-6.500" width="10" height="13" rx="2.500" transform={`rotate(${a})`} />)}
        </g>
        <circle r="10" fill="#000" /><circle r="5" fill="#e6e6e6" />
      </svg>
      <svg viewBox="0 0 49 42" className="-mt-1 ml-[61px] h-[42px] w-[49px] shrink-0"><path d="M23 34H6Q2 34 2 30V6Q2 2 6 2H38Q42 2 42 6V20" fill="none" stroke="#e6e6e6" strokeWidth="4" /><rect x="28" y="26" width="21" height="15" rx="3" fill="#e6e6e6" /></svg>
      <svg viewBox="-23 -23 46 46" className="-mt-1 ml-[60px] h-[46px] w-[46px] shrink-0" fill="#e6e6e6">
        {[0, 120, 240].map((a) => <path key={a} transform={`rotate(${a})`} d="M6.500 0H23A23 23 0 0 0 11.500 -20L3.250 -5.600A6.500 6.500 0 0 1 6.500 0Z" />)}
        <circle r="2.600" />
      </svg>
    </div>
  );
}

export default function App() {
  return (
    <div className="relative flex h-[1800px] w-[2880px] flex-col overflow-hidden bg-black font-['Open_Sans','Noto_Sans_CJK_SC',sans-serif]">
      <div className="h-[90px] shrink-0" />
      <div className="flex h-[1620px] flex-col overflow-hidden bg-[#f0f0f0]">
        <TitleRow />
        <MenuRow />
        <TabRow />
        <div className="flex h-[1331px]">
          <Sidebar />
          <div className="flex w-[195px] shrink-0 items-center border-r-2 border-[#989898] bg-[#ababab]"><div className="mb-[115px] ml-1 h-[66px] w-1.5 bg-[repeating-linear-gradient(#8e8e8e_0_3px,#b4b4b4_3px_5px)]" /></div>
          <Page />
          <div className="w-[184px] shrink-0 border-l-2 border-[#8c8c8c] bg-[#ababab]" />
          <div className="flex w-8 flex-col items-center bg-[#f1f1f1]">
            <div className="h-[15px] w-full border-2 border-[#999] bg-[#eee]" />
            <div className="mt-[207px] h-8 w-2.5 bg-[#8a8a8a]" />
          </div>
        </div>
        <StatusBar />
        <Taskbar />
      </div>

      <div className="pointer-events-none absolute left-0 top-[90px] h-[310px] w-[2880px] bg-linear-to-b from-black/26 to-transparent" />
      <div className="pointer-events-none absolute left-0 top-[1600px] h-[110px] w-[2880px] bg-linear-to-b from-transparent to-black/24" />
      <span className="absolute left-[2248px] top-[174px] whitespace-nowrap text-[57px] font-medium leading-none text-white/40">江科大自化协</span>
      <span className="absolute left-[2618px] top-[176px] whitespace-nowrap text-[50px] leading-none text-white/15">| bilibili</span>

      <Annotations />
      <div className="absolute left-[972px] top-[1521px] whitespace-nowrap text-[72px] font-normal leading-none text-[#f4f4fc] [-webkit-text-stroke:9px_#45435a] [paint-order:stroke_fill]">否则操作其他寄存器是无效的</div>
      <ProgressBar />

      <div className="absolute left-0 top-[46px] flex w-[2880px] items-start pl-[49px] pr-[57px] text-white">
        <Fit w={113} className="mt-2 text-[40px] leading-none">[10-2]</Fit>
        <Fit w={258} className="mt-2 ml-[13px] text-[40px] leading-none">MPU6050简介</Fit>
        <svg viewBox="0 0 41 41" className="ml-auto h-[41px] w-[41px]">
          <path d="M5 0H36Q41 0 41 5V28Q41 33 36 33H8L0 41V5Q0 0 5 0Z" fill="#d2d2d2" />
          <path d="M14.500 12Q15 6 21 6T27 12Q27 15 23.500 17Q20.500 19 20.500 22" fill="none" stroke="#000" strokeWidth="4" /><rect x="18" y="24.500" width="5" height="4.500" fill="#000" />
        </svg>
      </div>
      <svg viewBox="0 0 110 104" className="absolute left-[2693px] top-[1470px] h-[104px] w-[110px] overflow-visible drop-shadow-[0_1px_3px_rgba(0,0,0,0.350)]">
        <path d="M34 7L44 22M76 7L66 22" stroke="#eee" strokeWidth="12" strokeLinecap="round" />
        <path fillRule="evenodd" d="M20 17Q55 13 90 17Q107 20 108 37Q110 60 108 82Q107 98 90 102Q55 106 20 102Q3 98 2 82Q0 60 2 37Q3 20 20 17ZM38 46V77Q40 85 48 81L71 67Q78 61 71 55L48 41Q40 38 38 46Z" fill="#eeeeee" />
      </svg>
      <Controls />
    </div>
  );
}
